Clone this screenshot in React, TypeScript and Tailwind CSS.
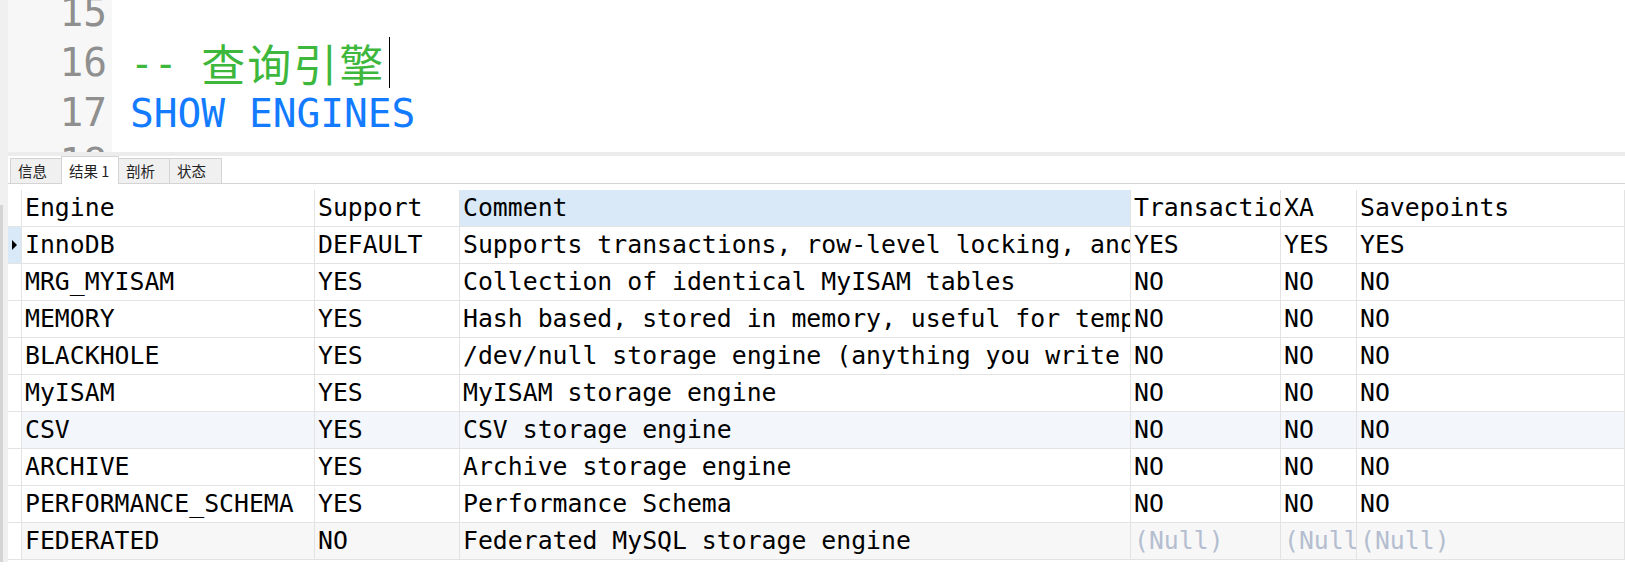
import React from 'react';

const mono = "font-['DejaVu_Sans_Mono','Liberation_Mono',monospace]";
const cols = 'grid grid-cols-[14px_293px_145px_671px_150px_76px_1fr]';

type EngineRow = {
  engine: string;
  support: string;
  comment: string;
  tx: string | null;
  xa: string | null;
  sp: string | null;
  bg?: string;
};

const rows: EngineRow[] = [
  { engine: 'InnoDB', support: 'DEFAULT', comment: 'Supports transactions, row-level locking, and foreign keys', tx: 'YES', xa: 'YES', sp: 'YES' },
  { engine: 'MRG_MYISAM', support: 'YES', comment: 'Collection of identical MyISAM tables', tx: 'NO', xa: 'NO', sp: 'NO' },
  { engine: 'MEMORY', support: 'YES', comment: 'Hash based, stored in memory, useful for temporary tables', tx: 'NO', xa: 'NO', sp: 'NO' },
  { engine: 'BLACKHOLE', support: 'YES', comment: '/dev/null storage engine (anything you write to it disappears)', tx: 'NO', xa: 'NO', sp: 'NO' },
  { engine: 'MyISAM', support: 'YES', comment: 'MyISAM storage engine', tx: 'NO', xa: 'NO', sp: 'NO' },
  { engine: 'CSV', support: 'YES', comment: 'CSV storage engine', tx: 'NO', xa: 'NO', sp: 'NO', bg: 'bg-[#f3f7fc]' },
  { engine: 'ARCHIVE', support: 'YES', comment: 'Archive storage engine', tx: 'NO', xa: 'NO', sp: 'NO' },
  { engine: 'PERFORMANCE_SCHEMA', support: 'YES', comment: 'Performance Schema', tx: 'NO', xa: 'NO', sp: 'NO' },
  { engine: 'FEDERATED', support: 'NO', comment: 'Federated MySQL storage engine', tx: null, xa: null, sp: null, bg: 'bg-[#f7f7f7]' },
];

function Cell({ children, className = '' }: { children?: React.ReactNode; className?: string }) {
  return (
    <div className={`flex h-[36px] items-center overflow-hidden whitespace-nowrap border-r border-[#e3e3e3] pl-[3px] ${className}`}>
      {children}
    </div>
  );
}

function Value({ v }: { v: string | null }) {
  if (v === null) return <span className="text-[#b4bed0]">(Null)</span>;
  return <span>{v}</span>;
}

const tabs = [
  { name: '信息', w: 'w-[52px]' },
  { name: '结果 1', w: 'w-[58px]', active: true },
  { name: '剖析', w: 'w-[52px]' },
  { name: '状态', w: 'w-[53px]' },
];

export default function App() {
  return (
    <div className="flex h-[570px] w-[1625px] overflow-hidden bg-white">
      {/* window edge */}
      <div className="flex h-[562px] w-[8px] shrink-0 flex-col bg-[#f0f0f0]">
        <div className="h-[205px]" />
        <div className="h-[357px] w-[3px] bg-[#d4d4d4]" />
      </div>

      <div className="flex min-w-0 flex-1 flex-col">
        {/* SQL editor */}
        <div className={`flex h-[152px] overflow-hidden text-[39.5px] leading-[50px] ${mono}`}>
          <div className="w-[104px] shrink-0 bg-[#f7f7f7] pr-[5px] text-right text-[#8f8f8f]">
            <div className="-mt-[13px]">
              <div>15</div>
              <div>16</div>
              <div>17</div>
              <div>18</div>
            </div>
          </div>
          <div className="flex-1 pl-[18px]">
            <div className="-mt-[13px] whitespace-pre">
              <div>&nbsp;</div>
              <div className="flex items-center text-[#3db83d]">
                <span>-- </span>
                <span className="font-['Noto_Sans_CJK_SC',sans-serif] text-[44px] tracking-[2px]">查询引擎</span>
                <span className="ml-[4px] h-[51px] w-px bg-black" />
              </div>
              <div className="text-[#127bff]">SHOW ENGINES</div>
              <div>&nbsp;</div>
            </div>
          </div>
        </div>

        <div className="h-[4px] bg-[#ececec]" />

        {/* result tabs */}
        <div className="flex h-[28px] items-end border-b border-[#d4d4d4] pl-[2px] font-['Noto_Sans_CJK_SC',sans-serif] text-[14.5px] text-[#222]">
          {tabs.map((t) =>
            t.active ? (
              <div key={t.name} className={`-mb-px -ml-px flex h-[28px] ${t.w} items-center border border-b-0 border-[#d4d4d4] bg-white pl-[7px]`}>
                {t.name}
              </div>
            ) : (
              <div key={t.name} className={`-ml-px flex h-[25px] ${t.w} items-center border border-b-0 border-[#d4d4d4] bg-[#f0f0f0] pl-[7px] first:ml-0`}>
                {t.name}
              </div>
            )
          )}
        </div>

        {/* result grid */}
        <div className={`mt-[6px] text-[24.8px] leading-none text-black ${mono}`}>
          <div className={`${cols} border-b border-[#e3e3e3]`}>
            <Cell />
            <Cell>Engine</Cell>
            <Cell>Support</Cell>
            <Cell className="bg-[#d9e9f7]">Comment</Cell>
            <Cell>Transactions</Cell>
            <Cell>XA</Cell>
            <Cell>Savepoints</Cell>
          </div>
          {rows.map((r, i) => (
            <div key={r.engine} className={`${cols} border-b border-[#e3e3e3]`}>
              <Cell className={i === 0 ? 'bg-[#d9e9f7] pl-[4px]' : ''}>
                {i === 0 && (
                  <svg width="5" height="10" viewBox="0 0 5 10">
                    <path d="M0 0 L5 5 L0 10 Z" fill="#000" />
                  </svg>
                )}
              </Cell>
              <Cell className={r.bg}>{r.engine}</Cell>
              <Cell className={r.bg}>{r.support}</Cell>
              <Cell className={r.bg}>{r.comment}</Cell>
              <Cell className={r.bg}><Value v={r.tx} /></Cell>
              <Cell className={r.bg}><Value v={r.xa} /></Cell>
              <Cell className={r.bg}><Value v={r.sp} /></Cell>
            </div>
          ))}
        </div>
      </div>
    </div>
  );
}
